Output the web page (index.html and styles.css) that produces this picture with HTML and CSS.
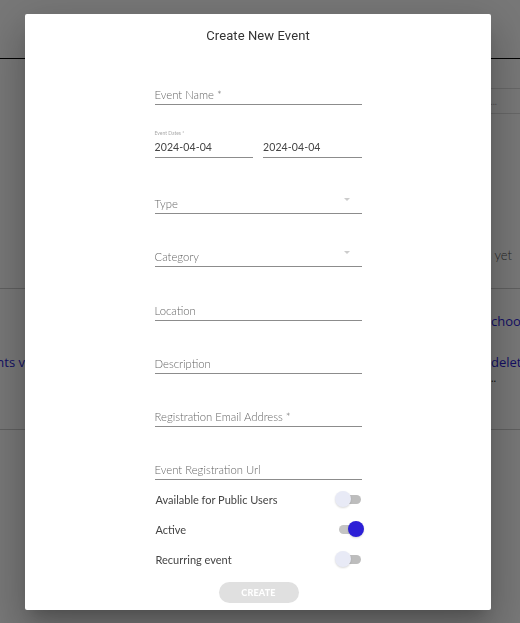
FILE: index.html
```html
<!DOCTYPE html>
<html>
<head>
<meta charset="utf-8">
<link rel="stylesheet" href="styles.css">
</head>
<body>
<div class="page">
  <header class="header"></header>
  <div class="toolbar">
    <div class="search"><span class="search-text">Search...</span></div>
  </div>
  <div class="empty-row"><span>There are no events yet</span></div>
  <div class="info">
    <div class="cell left"><span class="link">Past events v</span></div>
    <div class="cell mid"></div>
    <div class="cell right">
      <span class="link l1">choose</span>
      <span class="link l2">delete</span>
      <span class="dots">..</span>
    </div>
  </div>
</div>

<div class="overlay"></div>

<div class="dialog">
  <h2 class="title">Create New Event</h2>
  <form class="form">
    <div class="field f-name"><span class="ph">Event Name *</span></div>

    <div class="dates">
      <div class="tiny">Event Dates *</div>
      <div class="date-row">
        <div class="field date"><span class="val">2024-04-04</span></div>
        <div class="field date"><span class="val">2024-04-04</span></div>
      </div>
    </div>

    <div class="field f-type select"><span class="ph">Type</span><span class="caret"></span></div>
    <div class="field f-cat select"><span class="ph">Category</span><span class="caret"></span></div>
    <div class="field f-loc"><span class="ph">Location</span></div>
    <div class="field f-desc"><span class="ph">Description</span></div>
    <div class="field f-email"><span class="ph">Registration Email Address *</span></div>
    <div class="field f-url"><span class="ph">Event Registration Url</span></div>

    <div class="toggles">
      <div class="toggle-row"><span>Available for Public Users</span><span class="switch"><span class="thumb"></span></span></div>
      <div class="toggle-row"><span>Active</span><span class="switch on"><span class="thumb"></span></span></div>
      <div class="toggle-row"><span>Recurring event</span><span class="switch"><span class="thumb"></span></span></div>
    </div>

    <div class="actions"><button type="button" class="btn" disabled>CREATE</button></div>
  </form>
</div>
</body>
</html>
```
FILE: styles.css
```css
html, body {
  margin: 0;
  padding: 0;
  width: 520px;
  height: 623px;
  overflow: hidden;
  background: #fff;
  font-family: "Lato", "Open Sans", sans-serif;
}

.page {
  width: 520px;
  height: 623px;
}

.header {
  height: 58px;
  border-bottom: 1px solid #000;
}

.toolbar {
  display: flex;
  justify-content: flex-end;
  padding-top: 29px;
}

.search {
  width: 220px;
  height: 26px;
  border-top: 1px solid #ddd;
  border-bottom: 1px solid #ddd;
  display: flex;
  align-items: center;
  justify-content: flex-end;
  padding-right: 23px;
  box-sizing: border-box;
}

.search-text {
  font-size: 9px;
  color: #aaa;
}

.empty-row {
  height: 175px;
  display: flex;
  align-items: flex-end;
  justify-content: flex-end;
  padding-right: 8px;
  padding-bottom: 25px;
  box-sizing: border-box;
  font-size: 13px;
  line-height: 16px;
  color: #555;
  font-weight: 300;
  border-bottom: 1px solid #ccc;
}

.info {
  display: grid;
  grid-template-columns: 25px 466px 1fr;
  height: 140px;
  border-bottom: 1px solid #ccc;
}

.cell {
  overflow: hidden;
}

.left {
  display: flex;
  justify-content: flex-end;
  padding-top: 64px;
  white-space: nowrap;
}

.right {
  display: flex;
  flex-direction: column;
  white-space: nowrap;
  padding-top: 23px;
}

.link {
  color: #2c1fd6;
  font-size: 13px;
  line-height: 18px;
  font-family: "Open Sans", sans-serif;
}

.right .l2 {
  margin-top: 23px;
}

.dots {
  font-size: 11px;
  color: #333;
  line-height: 8px;
  margin-top: 3px;
}

.overlay {
  position: fixed;
  inset: 0;
  background: rgba(0, 0, 0, 0.53);
}

.dialog {
  position: absolute;
  left: 25px;
  top: 14px;
  width: 466px;
  height: 596px;
  background: #fff;
  border-radius: 2px;
  box-shadow: 0 11px 15px -7px rgba(0,0,0,.2), 0 24px 38px 3px rgba(0,0,0,.14), 0 9px 46px 8px rgba(0,0,0,.12);
  box-sizing: border-box;
}

.title {
  margin: 0;
  padding-top: 14px;
  text-align: center;
  font-family: "Roboto", sans-serif;
  font-weight: 400;
  font-size: 13px;
  line-height: 15px;
  color: #333;
  letter-spacing: 0.1px;
}

.form {
  width: 207px;
  margin: 0 auto;
  display: flex;
  flex-direction: column;
}

.field {
  border-bottom: 1px solid #8c8c8c;
  display: flex;
  align-items: flex-end;
  justify-content: space-between;
  padding-bottom: 3px;
  box-sizing: border-box;
  height: 21px;
}

.ph {
  font-size: 11.3px;
  line-height: 13px;
  color: #666;
  font-weight: 300;
}

.f-name { margin-top: 41px; }

.dates {
  margin-top: 25px;
}

.tiny {
  font-size: 5px;
  line-height: 6px;
  color: #aaa;
  height: 7px;
}

.date-row {
  display: flex;
  gap: 10px;
}

.date {
  flex: 1;
  padding-bottom: 4px;
}

.val {
  font-size: 10.5px;
  line-height: 12px;
  color: #444;
  letter-spacing: 0.1px;
}

.f-type { margin-top: 35px; }
.f-cat { margin-top: 32px; }
.f-loc { margin-top: 33px; }
.f-desc { margin-top: 32px; }
.f-email { margin-top: 32px; }
.f-url { margin-top: 32px; }

.caret {
  width: 0;
  height: 0;
  border-left: 3.5px solid transparent;
  border-right: 3.5px solid transparent;
  border-top: 3.5px solid #ccc;
  margin-right: 12px;
  margin-bottom: 9px;
}

.toggles {
  margin-top: 4px;
  display: flex;
  flex-direction: column;
}

.toggle-row {
  height: 30px;
  display: flex;
  align-items: center;
  justify-content: space-between;
  padding-left: 1px;
  font-size: 11px;
  color: #444;
  font-weight: 400;
}

.switch {
  position: relative;
  width: 22px;
  height: 9px;
  border-radius: 5px;
  background: #bdbdbd;
  margin-right: 1px;
}

.thumb {
  position: absolute;
  top: -3.5px;
  left: -4px;
  width: 16px;
  height: 16px;
  border-radius: 50%;
  background: #e8eaf6;
  box-shadow: 0 1px 2px rgba(0,0,0,0.15);
}

.switch.on .thumb {
  left: 9px;
  background: #2c1fd6;
}

.switch.on {
  background: #c4c4c4;
}

.actions {
  display: flex;
  justify-content: center;
  margin-top: 8px;
}

.btn {
  width: 80px;
  height: 21px;
  border-radius: 11px;
  border: none;
  background: #e0e0e0;
  color: #fff;
  font-family: "Lato", sans-serif;
  font-weight: 900;
  font-size: 9px;
  letter-spacing: 0.2px;
  padding: 0;
  margin-left: 1px;
}
```
